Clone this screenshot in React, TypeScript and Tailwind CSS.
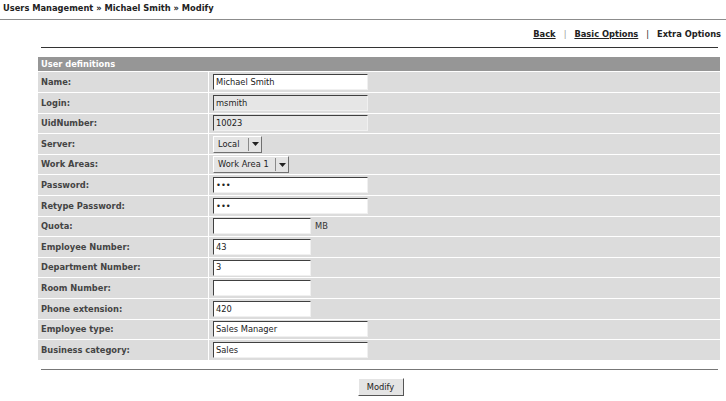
import React from "react";

type Field =
  | { label: string; kind: "text"; value: string; width: "long" | "short"; readOnly?: boolean; suffix?: string }
  | { label: string; kind: "select"; value: string; width: number };

const fields: Field[] = [
  { label: "Name:", kind: "text", value: "Michael Smith", width: "long" },
  { label: "Login:", kind: "text", value: "msmith", width: "long", readOnly: true },
  { label: "UidNumber:", kind: "text", value: "10023", width: "long", readOnly: true },
  { label: "Server:", kind: "select", value: "Local", width: 49 },
  { label: "Work Areas:", kind: "select", value: "Work Area 1", width: 76 },
  { label: "Password:", kind: "text", value: "•••", width: "long" },
  { label: "Retype Password:", kind: "text", value: "•••", width: "long" },
  { label: "Quota:", kind: "text", value: "", width: "short", suffix: "MB" },
  { label: "Employee Number:", kind: "text", value: "43", width: "short" },
  { label: "Department Number:", kind: "text", value: "3", width: "short" },
  { label: "Room Number:", kind: "text", value: "", width: "short" },
  { label: "Phone extension:", kind: "text", value: "420", width: "short" },
  { label: "Employee type:", kind: "text", value: "Sales Manager", width: "long" },
  { label: "Business category:", kind: "text", value: "Sales", width: "long" },
];

function TextBox({ value, width, readOnly }: { value: string; width: "long" | "short"; readOnly?: boolean }) {
  return (
    <div
      className={`flex h-[16px] items-center border-t border-l border-t-[#404040] border-l-[#404040] border-b border-r border-b-[#f0f0f0] border-r-[#f0f0f0] pl-[2px] text-[8.3px] text-[#222] ${
        width === "long" ? "w-[155px]" : "w-[98px]"
      } ${readOnly ? "bg-[#e6e6e6]" : "bg-white"}`}
    >
      {value}
    </div>
  );
}

function SelectBox({ value, width }: { value: string; width: number }) {
  return (
    <div
      className="flex h-[17px] items-center border border-t-white border-l-white border-b-[#707070] border-r-[#707070] bg-[#e4e4e4] text-[8.3px] text-[#222]"
      style={{ width }}
    >
      <span className="flex-1 pl-[4px] whitespace-nowrap">{value}</span>
      <span className="flex h-[13px] w-[13px] items-center justify-center border-l border-[#8a8a8a]">
        <svg width="7" height="4" viewBox="0 0 7 4">
          <path d="M0 0h7L3.5 4z" fill="#222" />
        </svg>
      </span>
    </div>
  );
}

export default function App() {
  return (
    <div className="h-[401px] w-[726px] bg-white text-[8.3px] text-[#222]" style={{ fontFamily: '"DejaVu Sans", Verdana, sans-serif' }}>
      <div className="flex h-[14px] items-end pl-[3px] font-bold text-[#222]">
        Users Management » Michael Smith » Modify
      </div>
      <div className="mt-[5px] h-px bg-[#8c8c8c]" />

      <div className="mt-[8px] flex justify-end gap-[8px] pr-[5px] font-bold">
        <span className="underline">Back</span>
        <span className="font-normal text-[#999]">|</span>
        <span className="underline">Basic Options</span>
        <span className="font-normal text-[#222]">|</span>
        <span>Extra Options</span>
      </div>

      <div className="mt-[7px] ml-[41px] mr-[8px] h-px bg-[#333]" />

      <div className="mt-[9px] ml-[38px] mr-[6px]">
        <div className="flex h-[14px] items-center bg-[#969696] pl-[3px] font-bold text-white">User definitions</div>
        <div className="flex flex-col gap-px bg-white pt-px">
          {fields.map((f) => (
            <div key={f.label} className="flex h-[19.6px] gap-px">
              <div className="flex w-[170px] items-center bg-[#dcdcdc] pl-[3px] font-bold text-[#444]">{f.label}</div>
              <div className="flex flex-1 items-center gap-[4px] bg-[#dcdcdc] pl-[4px]">
                {f.kind === "text" ? (
                  <>
                    <TextBox value={f.value} width={f.width} readOnly={f.readOnly} />
                    {f.suffix && <span className="text-[#333]">{f.suffix}</span>}
                  </>
                ) : (
                  <SelectBox value={f.value} width={f.width} />
                )}
              </div>
            </div>
          ))}
        </div>
      </div>

      <div className="mt-[9px] ml-[41px] mr-[8px] h-px bg-[#777]" />

      <div className="mt-[8px] flex justify-center pl-[35px]">
        <button className="h-[18px] w-[46px] border border-t-white border-l-white border-b-[#555] border-r-[#555] bg-[#e4e4e4] text-[8.3px] text-[#222]">
          Modify
        </button>
      </div>
    </div>
  );
}
